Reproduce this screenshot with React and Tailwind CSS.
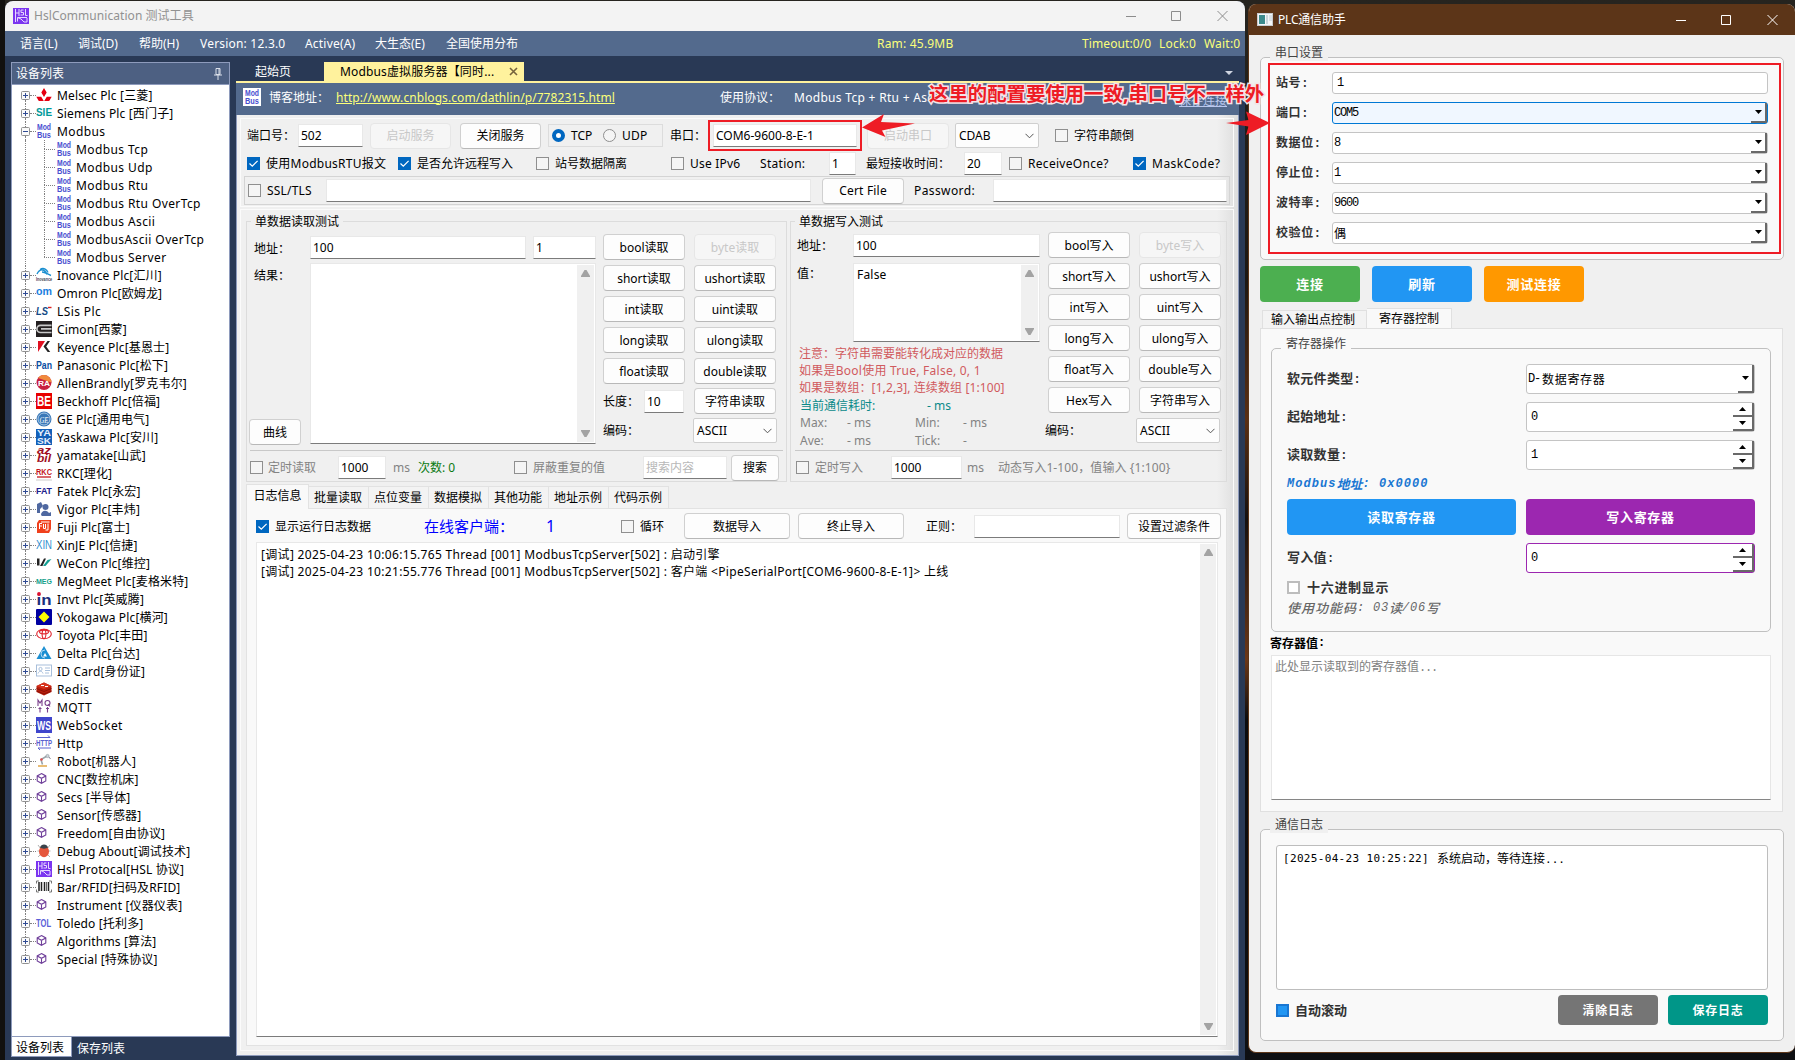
import React from "react";
import clsx from "clsx";

const UI = "font-['Noto_Sans','Noto_Sans_CJK_SC',sans-serif]";
const MONO = "font-['Liberation_Mono','Noto_Sans_CJK_SC',monospace]";

/* ---------- shared controls of the left window ---------- */

function Text({ className, children }) {
  return <div className={clsx("shrink-0 whitespace-nowrap", className)}>{children}</div>;
}

function Check({ on, className }) {
  return (
    <div
      className={clsx(
        "flex h-[13px] w-[13px] shrink-0 items-center justify-center",
        on ? "bg-[#0067c0]" : "border border-[#8f8f8f] bg-[#f5f5f5]",
        className
      )}
    >
      {on && (
        <svg width="11" height="11" viewBox="0 0 11 11" fill="none" stroke="#fff" strokeWidth="1.2">
          <path d="M1.5 5.5 4.3 8.2 9.6 2.8" />
        </svg>
      )}
    </div>
  );
}

function Btn({ disabled, className, children }) {
  return (
    <div
      className={clsx(
        "flex h-[26px] shrink-0 items-center justify-center whitespace-nowrap rounded-[4px] border",
        disabled
          ? "border-[#e6e6e6] bg-[#f6f6f6] text-[#c8c8c8]"
          : "border-[#d0d0d0] border-b-[#b8b8b8] bg-[#fdfdfd] text-black",
        className
      )}
    >
      {children}
    </div>
  );
}

function Input({ className, children }) {
  return (
    <div
      className={clsx(
        "flex h-[23px] shrink-0 items-center whitespace-nowrap border border-[#e8e8e8] border-b-[#7b7b7b] bg-white pl-[2px] text-black",
        className
      )}
    >
      {children}
    </div>
  );
}

function Select({ className, children }) {
  return (
    <div
      className={clsx(
        "flex h-[25px] shrink-0 items-center justify-between rounded-[2px] border border-[#cfcfcf] bg-[#fdfdfd] pl-[3px] pr-[4px] text-black",
        className
      )}
    >
      {children}
      <svg width="9" height="6" viewBox="0 0 9 6" fill="none" stroke="#555" strokeWidth="1">
        <path d="M0.5 0.8 4.5 4.8 8.5 0.8" />
      </svg>
    </div>
  );
}

function Scroll({ className }) {
  return (
    <div className={clsx("flex shrink-0 flex-col items-center justify-between bg-[#f0f0f0] py-[5px]", className)}>
      <svg width="9" height="7" viewBox="0 0 9 7" fill="#a3a3a3"><path d="M3.5 0h2L9 6v1H0V6z" /></svg>
      <svg width="9" height="7" viewBox="0 0 9 7" fill="#a3a3a3"><path d="M3.5 7h2L9 1V0H0v1z" /></svg>
    </div>
  );
}

/* ---------- tree icons ---------- */

function G({ children }) {
  return <svg className="shrink-0 overflow-visible" width="16" height="16" viewBox="0 0 16 16">{children}</svg>;
}

function Word({ t, c = "#fff", bg, size = 8, y = 11, w = 15, x = 0.5, italic, weight = 700 }) {
  return (
    <G>
      {bg && <rect width="16" height="16" fill={bg} />}
      <text x={x} y={y} fill={c} fontSize={size} fontWeight={weight} fontStyle={italic ? "italic" : "normal"} fontFamily="Liberation Sans" textLength={w} lengthAdjust="spacingAndGlyphs">{t}</text>
    </G>
  );
}

function TwoWords({ a, b, c, bg, italic, size = 8 }) {
  return (
    <G>
      {bg && <rect width="16" height="16" fill={bg} />}
      <g fill={c} fontSize={size} fontWeight="700" fontStyle={italic ? "italic" : "normal"} fontFamily="Liberation Sans">
        <text x="1" y="7" textLength="14" lengthAdjust="spacingAndGlyphs">{a}</text>
        <text x="1" y="14.500" textLength="14" lengthAdjust="spacingAndGlyphs">{b}</text>
      </g>
    </G>
  );
}

const ModIcon = () => <TwoWords a="Mod" b="Bus" c="#4a4fd0" size={8.8} />;

const HslIcon = () => (
  <G>
    <rect width="16" height="16" fill="#7b35f0" />
    <g fill="none" stroke="#e6d8ff" strokeWidth="1">
      <path d="M2.500 1v13M2.500 5h3.500M6 1v7M10.500 2H8v2.500h2.500V7H7.500M12.500 1v6.500h2M4.500 13.500v-4l3.500 1.500 3 3h3v-4M5 9.500h9" />
    </g>
  </G>
);

const Cube = () => (
  <G>
    <g fill="none" stroke="#6f3f9a" strokeWidth="1.100" transform="translate(-0.5 0)">
      <path d="M6 2.600 10.300 4.900v5L6 12.300 1.700 9.900v-5zM6 7.300v5M1.700 4.900 6 7.300l4.300-2.400" />
    </g>
  </G>
);

const ICONS = {
  melsec: <G><g fill="#e60012"><path d="M8 1 10.700 5.500 8 10 5.300 5.500zM5.200 9.700H0.300L2.800 14H7.800zM10.800 9.700h4.900L13.200 14H8.200z" /></g></G>,
  siemens: <Word t="SIE" c="#009999" size={10} w={16} x={0} />,
  modbus: <ModIcon />,
  inovance: <G><g fill="none" stroke="#1b8fd0" strokeWidth="1.400"><path d="M1 7C4 1 9 2 11 7.500M4 2.500C8 0 11 3 12 5.500M6 5c3 0 5 2 9 3.500" /></g><text x="0" y="13.500" fontSize="5" fill="#445" fontWeight="700" fontFamily="Liberation Sans" textLength="16" lengthAdjust="spacingAndGlyphs">Inovance</text></G>,
  omron: <Word t="om" c="#1a80e0" size={11} y={9.500} w={16} x={0} />,
  lsis: <G><text x="0" y="12" fontSize="10" fontStyle="italic" fontWeight="700" fill="#134a86" fontFamily="Liberation Sans" textLength="12" lengthAdjust="spacingAndGlyphs">LS</text><path d="M12 4.500h3.500" stroke="#d22" strokeWidth="1.400" /></G>,
  cimon: <G><rect width="16" height="16" fill="#231f20" /><path d="M15.500 4.300H4.500a3.600 3.600 0 0 0 0 7.200H15.500M5 7.900h10.500" fill="none" stroke="#c8c8c8" strokeWidth="1.700" /></G>,
  keyence: <G><path d="M2 2h7L2 13z" fill="#e01020" /><path d="M7.500 7.500l4-5.500h2.500l-3.800 5.500 4 5.500h-2.500z" fill="#222" /></G>,
  panasonic: <Word t="Pan" c="#0b4ea2" size={11.5} y={12} w={16} x={0} />,
  allen: <G><circle cx="8" cy="7.500" r="7.500" fill="#c8203f" /><path d="M8 0a7.500 7.500 0 0 1 7.500 7.500L2 3A7 7 0 0 1 8 0z" fill="#f08a3c" /><text x="2" y="10.500" fontSize="8" fontWeight="700" fill="#fff" fontFamily="Liberation Sans" textLength="12" lengthAdjust="spacingAndGlyphs">RA</text></G>,
  beckhoff: <Word t="BE" bg="#e80000" size={14} y={13} w={14} x={1} />,
  ge: <G><circle cx="8" cy="8" r="7.500" fill="#3a78b8" /><circle cx="8" cy="8" r="6" fill="none" stroke="#d6e6f5" strokeWidth="0.700" /><text x="3.500" y="11.500" fontSize="9" fontStyle="italic" fill="#fff" fontFamily="Liberation Serif" textLength="9" lengthAdjust="spacingAndGlyphs">GE</text></G>,
  yaskawa: <TwoWords a="YA" b="SK" c="#e8f2ff" bg="#1560b8" size={9} />,
  yamatake: <TwoWords a="az" b="bil" c="#a00d22" italic size={10} />,
  rkc: <G><text x="0" y="10" fontSize="9" fontWeight="700" fill="#c4161c" fontFamily="Liberation Sans" textLength="16" lengthAdjust="spacingAndGlyphs">RKC</text><path d="M1 12h14" stroke="#c4161c" strokeWidth="1.300" /><path d="M0 15h16" stroke="#ccc" /></G>,
  fatek: <Word t="FAT" c="#20208c" size={8.5} w={16} x={0} />,
  vigor: <G><g fill="#4f68a0"><path d="M1 3l4-2 2 4-3 3v4H1V8z" /><circle cx="9.500" cy="6" r="3" /><path d="M5 14c0-4 5-6 8-2l2-1v4H6z" /></g></G>,
  fuji: <G><path d="M3 1h12v9l-2 4H1V4z" fill="#f0401c" /><path d="M3.500 10V4.500H6M3.500 7H6M7.500 5v4.500h2V5M12 4.500V11H9.500M13.500 3H5" fill="none" stroke="#fff" strokeWidth="1" /></G>,
  xinje: <Word t="XIN" c="#2f8fd0" size={12} y={12} w={16} x={0} weight={400} />,
  wecon: <G><path d="M1 3.500h2.500v7H1z" fill="#222" /><path d="M4 11l4-7.500h2L6.500 11z" fill="#222" /><path d="M7 11l4.500-6L15.500 4 9.500 11z" fill="#12a094" /></G>,
  megmeet: <Word t="MEG" c="#13a08a" size={7.5} y={10.5} w={16} x={0} />,
  invt: <G><text x="0.500" y="13.500" fontSize="14" fontWeight="700" fill="#1a2f7c" fontFamily="Liberation Sans" textLength="15" lengthAdjust="spacingAndGlyphs">in</text><circle cx="3" cy="3" r="1.900" fill="#e01030" /></G>,
  yokogawa: <G><rect width="16" height="16" rx="1" fill="#0000a0" /><path d="M8 2.500 13.500 8 8 13.500 2.500 8z" fill="#ffff00" /></G>,
  toyota: <G><g fill="none" stroke="#e0242c" strokeWidth="1.100"><ellipse cx="8" cy="7" rx="7.300" ry="4.800" /><ellipse cx="8" cy="5" rx="4.500" ry="1.900" /><ellipse cx="8" cy="7" rx="1.900" ry="4.600" /></g></G>,
  delta: <G><path d="M8 1 15.500 14H0.500z" fill="#1b8fd2" /><path d="M9 5a4 4 0 0 0 0 8" fill="none" stroke="#bfe0f5" strokeWidth="0.900" /><path d="M9 8 7 11.500h4z" fill="#fff" /></G>,
  idcard: <G><g fill="none" stroke="#9fb9d8" strokeWidth="0.900"><rect x="0.500" y="2" width="15" height="11" /><circle cx="4.500" cy="6" r="1.600" /><path d="M2 10.500c1-3 4-3 5 0M9 5h5M9 7.500h5M9 10h4" /></g></G>,
  redis: <G><path d="M0.500 5 8 1.500 15.500 5v6L8 14.500 0.500 11z" fill="#b81c0c" /><path d="M0.500 5 8 8 15.500 5 8 1.500z" fill="#d83520" /><path d="M0.500 7.500 8 10.500l7.500-3M0.500 10 8 13l7.500-3" fill="none" stroke="#7e0f06" strokeWidth="0.800" /><path d="M5 4.500h3M9 5.500h3" stroke="#fff" strokeWidth="1" /></G>,
  mqtt: <G><g fill="none" stroke="#7a3f8c" strokeWidth="1.100"><path d="M2 7V1l2 3 2-3v6M4 8v5.500M2.500 9.500h3M11.500 8v5.500M10 9.500h3" /><circle cx="11.500" cy="4" r="2.500" /><path d="M12 5l2 2.500" /></g></G>,
  ws: <Word t="WS" bg="#3f45cc" size={13} y={12.8} w={14} x={1} />,
  http: <G><text x="0" y="11" fontSize="9" fontWeight="700" fill="#5a62d0" fontFamily="Liberation Sans" textLength="16" lengthAdjust="spacingAndGlyphs">HTTP</text><path d="M1 2.500h13l-2-2M15 13H2l2 2" fill="none" stroke="#5a62d0" strokeWidth="1" /></G>,
  robot: <G><path d="M6.500 11.500 5 6.500 11 3" fill="none" stroke="#9aa4aa" strokeWidth="1.600" /><circle cx="5.500" cy="6.500" r="1.300" fill="#e05050" /><circle cx="11.500" cy="3" r="1.600" fill="#cfd6da" stroke="#8a949a" strokeWidth="0.600" /><path d="M13 4l1.500 2" stroke="#889" /><path d="M2 12h9v2H2z" fill="#e8bc74" /></G>,
  cube: <Cube />,
  bug: <G><path d="M2 2l3 4M14 2l-3 4M1.500 8h3M14.500 8h-3M2 14l3-3M14 14l-3-3" stroke="#a8a8a8" strokeWidth="0.900" /><ellipse cx="8" cy="8.500" rx="5" ry="5.800" fill="#e5573c" /><path d="M4 4.500C5 0.500 11 0.500 12 4.500 10 6 6 6 4 4.500z" fill="#39424a" /></G>,
  hsl: <HslIcon />,
  bar: <G><path d="M3 2H0.500v2.500M13 2h2.500v2.500M3 13H0.500v-2.500M13 13h2.500v-2.500" fill="none" stroke="#666" strokeWidth="0.900" /><path d="M3 3v9M5.500 3v9M8.500 3v9M12.500 3v9" stroke="#222" strokeWidth="1.500" /><path d="M10.500 3v9" stroke="#222" strokeWidth="0.700" /></G>,
  tol: <Word t="TOL" c="#5a5fd8" size={11} y={11.5} w={15} x={0} />,
};

const TREE = [
  ["melsec", "Melsec Plc [三菱]"],
  ["siemens", "Siemens Plc [西门子]"],
  ["modbus", "Modbus", ["Modbus Tcp", "Modbus Udp", "Modbus Rtu", "Modbus Rtu OverTcp", "Modbus Ascii", "ModbusAscii OverTcp", "Modbus Server"]],
  ["inovance", "Inovance Plc[汇川]"],
  ["omron", "Omron Plc[欧姆龙]"],
  ["lsis", "LSis Plc"],
  ["cimon", "Cimon[西蒙]"],
  ["keyence", "Keyence Plc[基恩士]"],
  ["panasonic", "Panasonic Plc[松下]"],
  ["allen", "AllenBrandly[罗克韦尔]"],
  ["beckhoff", "Beckhoff Plc[倍福]"],
  ["ge", "GE Plc[通用电气]"],
  ["yaskawa", "Yaskawa Plc[安川]"],
  ["yamatake", "yamatake[山武]"],
  ["rkc", "RKC[理化]"],
  ["fatek", "Fatek Plc[永宏]"],
  ["vigor", "Vigor Plc[丰炜]"],
  ["fuji", "Fuji Plc[富士]"],
  ["xinje", "XinJE Plc[信捷]"],
  ["wecon", "WeCon Plc[维控]"],
  ["megmeet", "MegMeet Plc[麦格米特]"],
  ["invt", "Invt Plc[英威腾]"],
  ["yokogawa", "Yokogawa Plc[横河]"],
  ["toyota", "Toyota Plc[丰田]"],
  ["delta", "Delta Plc[台达]"],
  ["idcard", "ID Card[身份证]"],
  ["redis", "Redis"],
  ["mqtt", "MQTT"],
  ["ws", "WebSocket"],
  ["http", "Http"],
  ["robot", "Robot[机器人]"],
  ["cube", "CNC[数控机床]"],
  ["cube", "Secs [半导体]"],
  ["cube", "Sensor[传感器]"],
  ["cube", "Freedom[自由协议]"],
  ["bug", "Debug About[调试技术]"],
  ["hsl", "Hsl Protocal[HSL 协议]"],
  ["bar", "Bar/RFID[扫码及RFID]"],
  ["cube", "Instrument [仪器仪表]"],
  ["tol", "Toledo [托利多]"],
  ["cube", "Algorithms [算法]"],
  ["cube", "Special [特殊协议]"],
];

function Expander({ open }) {
  return (
    <svg className="shrink-0" width="9" height="9" viewBox="0 0 9 9">
      <rect x="0.500" y="0.500" width="8" height="8" rx="1" fill="#fafafa" stroke="#919191" />
      <path d={open ? "M2 4.500h5" : "M2 4.500h5M4.500 2v5"} stroke="#2f4a93" strokeWidth="1" />
    </svg>
  );
}

function TreeNode({ icon, label, kids, first, last }) {
  return (
    <div>
      <div className="flex h-[18px] items-center">
        <div className="flex w-[9px] shrink-0 flex-col items-center self-stretch">
          <div className={clsx("w-0 flex-1 border-l border-dotted", first ? "border-transparent" : "border-[#808080]")} />
          <Expander open={!!kids} />
          <div className={clsx("w-0 flex-1 border-l border-dotted", last ? "border-transparent" : "border-[#808080]")} />
        </div>
        <div className="w-[6px] border-t border-dotted border-[#808080]" />
        {ICONS[icon]}
        <div className={clsx("ml-[5px] whitespace-nowrap", /^[\x20-\x7e]+$/.test(label) ? "tracking-[0.400px]" : "tracking-[0.150px]")}>{label}</div>
      </div>
      {kids && (
        <div className="ml-[4px] border-l border-dotted border-[#808080]">
          {kids.map((k, i) => (
            <div key={k} className="ml-[18px] flex h-[18px] items-center">
              <div className="flex w-0 flex-col self-stretch">
                <div className="flex-1 border-l border-dotted border-[#808080]" />
                <div className={clsx("flex-1 border-l border-dotted", i === kids.length - 1 ? "border-transparent" : "border-[#808080]")} />
              </div>
              <div className="mr-px w-[11px] border-t border-dotted border-[#808080]" />
              <ModIcon />
              <div className="ml-[4px] whitespace-nowrap tracking-[0.400px]">{k}</div>
            </div>
          ))}
        </div>
      )}
    </div>
  );
}

function Sidebar() {
  return (
    <div className="ml-[6px] mt-[6px] flex w-[219px] shrink-0 flex-col">
      <div className="flex h-[23px] shrink-0 items-center justify-between border border-[#8e9bbc] bg-[#4d6082] pl-[4px] pr-[7px] text-white">
        <span>设备列表</span>
        <svg width="8" height="12" viewBox="0 0 8 12" fill="none" stroke="#dbe0ea"><path d="M2 0.500h4v6H2zM5 0v7M0 7h8M4 7v5" /></svg>
      </div>
      <div className="flex h-[952px] shrink-0 flex-col border border-t-0 border-[#8e9bbc] bg-white pl-[9px] pt-[1px] text-black">
        {TREE.map(([icon, label, kids], i) => (
          <TreeNode key={label} icon={icon} label={label} kids={kids} first={i === 0} last={i === TREE.length - 1} />
        ))}
      </div>
      <div className="flex h-[20px] text-white">
        <div className="flex w-[61px] items-center border border-t-0 border-[#8e9bbc] bg-white pl-[4px] pt-[2px] text-black">设备列表</div>
        <div className="ml-[5px] flex items-center pt-[2px]">保存列表</div>
      </div>
    </div>
  );
}

/* ---------- left window, server page ---------- */

function ConfigPanel() {
  return (
    <div className="ml-[3px] mt-[3px] h-[89px] w-[994px] shrink-0 border border-[#fbfbfb]">
      <div className="mt-[1px] flex h-[31px] items-center pl-[6px]">
        <Text className="w-[51px]">端口号：</Text>
        <Input className="w-[65px]">502</Input>
        <Btn disabled className="ml-[7px] w-[81px]">启动服务</Btn>
        <Btn className="ml-[9px] w-[81px]">关闭服务</Btn>
        <div className="ml-[7px] flex h-[23px] w-[115px] shrink-0 items-center border border-[#dcdcdc] pl-[3px]">
          <div className="h-[13px] w-[13px] rounded-full border-[4px] border-[#0067c0] bg-white" />
          <Text className="ml-[6px] w-[32px]">TCP</Text>
          <div className="h-[13px] w-[13px] rounded-full border border-[#8f8f8f] bg-[#f5f5f5]" />
          <Text className="ml-[6px] tracking-[0.200px]">UDP</Text>
        </div>
        <Text className="ml-[7px] w-[38px]">串口：</Text>
        <div className="flex h-[31px] w-[154px] shrink-0 items-center border-2 border-[#ee1c25] pl-[3px]">
          <Input className="w-[144px]">COM6-9600-8-E-1</Input>
        </div>
        <Btn disabled className="ml-[5px] w-[82px]">启动串口</Btn>
        <Select className="ml-[6px] w-[84px]">CDAB</Select>
        <Check className="ml-[16px]" />
        <Text className="ml-[6px]">字符串颠倒</Text>
      </div>
      <div className="flex h-[24px] items-center pl-[6px]">
        <Check on />
        <Text className="ml-[6px] w-[132px] tracking-[0.250px]">使用ModbusRTU报文</Text>
        <Check on />
        <Text className="ml-[6px] w-[119px]">是否允许远程写入</Text>
        <Check />
        <Text className="ml-[6px] w-[116px]">站号数据隔离</Text>
        <Check />
        <Text className="ml-[6px] w-[70px] tracking-[0.200px]">Use IPv6</Text>
        <Text className="w-[69px] tracking-[0.300px]">Station:</Text>
        <Input className="w-[27px]">1</Input>
        <Text className="ml-[10px] w-[98px]">最短接收时间：</Text>
        <Input className="w-[38px]">20</Input>
        <Check className="ml-[7px]" />
        <Text className="ml-[6px] w-[105px] tracking-[0.300px]">ReceiveOnce?</Text>
        <Check on />
        <Text className="ml-[6px] tracking-[0.500px]">MaskCode?</Text>
      </div>
      <div className="ml-[3px] mt-px flex h-[29px] w-[986px] items-center border border-[#d4d4d4] pl-[3px]">
        <Check />
        <Text className="ml-[6px] w-[59px] tracking-[0.200px]">SSL/TLS</Text>
        <Input className="w-[485px]" />
        <Btn className="ml-[11px] w-[82px] tracking-[0.200px]">Cert File</Btn>
        <Text className="ml-[10px] w-[79px] tracking-[0.400px]">Password:</Text>
        <Input className="w-[234px]" />
      </div>
    </div>
  );
}

function Fieldset({ title, className, children }) {
  return (
    <div className={clsx("h-[261px] shrink-0 border border-[#dcdcdc]", className)}>
      <div className="-mt-[10px] ml-[4px] flex h-[20px] w-fit items-center bg-[#f0f0f0] px-[4px] pb-px">{title}</div>
      {children}
    </div>
  );
}

function ReadBox() {
  return (
    <Fieldset title="单数据读取测试" className="w-[541px]">
      <div className="flex h-[216px] pl-[2px] pt-[2px]">
        <div className="flex w-[61px] shrink-0 flex-col">
          <Text className="ml-[5px] mt-[6px]">地址：</Text>
          <Text className="ml-[5px] mt-[10px]">结果：</Text>
          <Btn className="mt-[135px] w-[52px]">曲线</Btn>
        </div>
        <div className="mt-[2px] w-[286px] shrink-0">
          <div className="flex justify-between">
            <Input className="w-[216px]">100</Input>
            <Input className="w-[63px]">1</Input>
          </div>
          <div className="mt-[4px] flex h-[181px] justify-end border border-[#e8e8e8] border-b-[#7b7b7b] bg-white p-px">
            <Scroll className="w-[17px]" />
          </div>
        </div>
        <div className="ml-[7px] grid h-fit grid-cols-[82px_82px] gap-x-[9px] gap-y-[5px]">
          <Btn>bool读取</Btn><Btn disabled>byte读取</Btn>
          <Btn>short读取</Btn><Btn>ushort读取</Btn>
          <Btn>int读取</Btn><Btn>uint读取</Btn>
          <Btn>long读取</Btn><Btn>ulong读取</Btn>
          <Btn>float读取</Btn><Btn>double读取</Btn>
          <div className="-mt-px flex items-center"><Text className="w-[41px]">长度：</Text><Input className="w-[40px]">10</Input></div>
          <Btn className="-mt-px">字符串读取</Btn>
          <Text className="mt-[3px]">编码：</Text>
          <Select className="-ml-px -mt-px w-[84px]">ASCII</Select>
        </div>
      </div>
      <div className="mx-[3px] mt-[2px] border-b border-[#c8c8c8]" />
      <div className="mt-[5px] flex h-[23px] items-center pl-[3px] text-[#838383]">
        <Check />
        <Text className="ml-[5px] w-[70px]">定时读取</Text>
        <Input className="w-[48px]">1000</Input>
        <Text className="ml-[7px] w-[25px]">ms</Text>
        <Text className="w-[96px] text-[#0a7a12]">次数: 0</Text>
        <Check />
        <Text className="ml-[6px] w-[110px]">屏蔽重复的值</Text>
        <Input className="w-[84px]"><span className="text-[#b8b8b8]">搜索内容</span></Input>
        <Btn className="ml-[4px] h-[24px] w-[48px]">搜索</Btn>
      </div>
    </Fieldset>
  );
}

function WriteBox() {
  return (
    <Fieldset title="单数据写入测试" className="ml-[3px] w-[437px]">
      <div className="flex h-[216px] pl-[6px]">
        <div className="w-[243px] shrink-0">
          <div className="mt-[2px] flex items-center">
            <Text className="w-[56px]">地址：</Text>
            <Input className="w-[187px]">100</Input>
          </div>
          <div className="mt-[6px] flex">
            <Text className="mt-[2px] w-[56px]">值：</Text>
            <div className="flex h-[79px] w-[187px] justify-between border border-[#e8e8e8] border-b-[#7b7b7b] bg-white p-px">
              <span className="ml-[2px] mt-px tracking-[0.200px]">False</span>
              <Scroll className="w-[17px]" />
            </div>
          </div>
          <div className="ml-[2px] mt-[3px] whitespace-nowrap leading-[17px] text-[#d05a5e]">
            <div>注意：字符串需要能转化成对应的数据</div>
            <div className="tracking-[0.250px]">如果是Bool使用 True, False, 0, 1</div>
            <div className="tracking-[0.100px]">如果是数组：[1,2,3], 连续数组 [1:100]</div>
          </div>
          <div className="ml-[3px] flex h-[18px] items-center text-[#0a8a8a]">
            <Text className="w-[127px]">当前通信耗时:</Text>- ms
          </div>
          <div className="ml-[3px] grid h-[35px] grid-cols-[47px_68px_48px_40px] items-center text-[#838383]">
            <span>Max:</span><span>- ms</span><span>Min:</span><span>- ms</span>
            <span>Ave:</span><span>- ms</span><span>Tick:</span><span>-</span>
          </div>
        </div>
        <div className="ml-[8px] grid h-fit grid-cols-[82px_82px] gap-x-[9px] gap-y-[5px]">
          <Btn>bool写入</Btn><Btn disabled>byte写入</Btn>
          <Btn>short写入</Btn><Btn>ushort写入</Btn>
          <Btn>int写入</Btn><Btn>uint写入</Btn>
          <Btn>long写入</Btn><Btn>ulong写入</Btn>
          <Btn>float写入</Btn><Btn>double写入</Btn>
          <Btn>Hex写入</Btn><Btn>字符串写入</Btn>
          <Text className="-ml-[3px] mt-[4px]">编码：</Text>
          <Select className="-ml-[3px] w-[84px]">ASCII</Select>
        </div>
      </div>
      <div className="mx-[4px] mt-[2px] border-b border-[#c8c8c8]" />
      <div className="mt-[5px] flex h-[23px] items-center pl-[5px] text-[#838383]">
        <Check />
        <Text className="ml-[6px] w-[76px]">定时写入</Text>
        <Input className="w-[71px]">1000</Input>
        <Text className="ml-[5px] w-[31px]">ms</Text>
        <Text className="tracking-[0.100px]">动态写入1-100，值输入 &#123;1:100&#125;</Text>
      </div>
    </Fieldset>
  );
}

function LogPane() {
  return (
    <div className="ml-[9px] mt-[2px]">
      <div className="flex items-end">
        <div className="-mb-px flex h-[25px] w-[63px] items-center justify-center border border-b-0 border-[#e2e2e2] bg-[#f9f9f9] pb-[3px]">日志信息</div>
        {["批量读取", "点位变量", "数据模拟", "其他功能", "地址示例", "代码示例"].map((t) => (
          <div key={t} className="flex h-[22px] w-[60px] items-center border border-b-0 border-l-0 border-[#e2e2e2] bg-[#f3f3f3] pl-[5px]">{t}</div>
        ))}
      </div>
      <div className="h-[538px] w-[981px] border border-[#e2e2e2] bg-[#f9f9f9]">
        <div className="mt-[4px] flex h-[26px] items-center pl-[9px]">
          <Check on />
          <Text className="ml-[6px] w-[149px]">显示运行日志数据</Text>
          <Text className="w-[122px] text-[15px] text-[#0000ff]">在线客户端：</Text>
          <Text className="w-[75px] text-[16px] text-[#0000ff]">1</Text>
          <Check />
          <Text className="ml-[6px] w-[44px]">循环</Text>
          <Btn className="w-[106px]">数据导入</Btn>
          <Btn className="ml-[8px] w-[106px]">终止导入</Btn>
          <Text className="ml-[22px] w-[48px]">正则：</Text>
          <Input className="w-[146px]" />
          <Btn className="ml-[7px] w-[94px]">设置过滤条件</Btn>
        </div>
        <div className="ml-[9px] mt-[3px] flex h-[495px] w-[962px] justify-between border border-[#e8e8e8] border-b-[#7b7b7b] bg-white p-px">
          <div className="pl-[3px] pt-[2px] leading-[17px] tracking-[0.320px]">
            <div>[调试] 2025-04-23 10:06:15.765 Thread [001] ModbusTcpServer[502] : 启动引擎</div>
            <div>[调试] 2025-04-23 10:21:55.776 Thread [001] ModbusTcpServer[502] : 客户端 &lt;PipeSerialPort[COM6-9600-8-E-1]&gt; 上线</div>
          </div>
          <Scroll className="w-[16px]" />
        </div>
      </div>
    </div>
  );
}

function ServerPage() {
  return (
    <div className="ml-[6px] flex w-[1003px] shrink-0 flex-col">
      <div className="flex h-[27px] shrink-0 items-end border-b-2 border-[#fff29d]">
        <div className="flex h-[19px] w-[88px] items-center pl-[19px] text-white">起始页</div>
        <div className="flex h-[19px] w-[200px] items-center justify-between bg-[#fff29d] pl-[16px] pr-[6px] text-black">
          <span className="whitespace-nowrap tracking-[0.150px]">Modbus虚拟服务器【同时...</span>
          <svg width="9" height="9" viewBox="0 0 9 9" stroke="#75633d" strokeWidth="1.600"><path d="M1 1l7 7M8 1 1 8" /></svg>
        </div>
        <svg className="mb-[6px] ml-auto mr-[6px]" width="8" height="4" viewBox="0 0 8 4" fill="#ced4e0"><path d="M0 0h8L4 4z" /></svg>
      </div>
      <div className="flex h-[32px] shrink-0 items-center bg-[#536a8d] pb-[4px] pl-[7px] text-white">
        <div className="flex h-[18px] w-[18px] shrink-0 items-center justify-center bg-white"><ModIcon /></div>
        <Text className="ml-[8px] w-[67px]">博客地址：</Text>
        <Text className="w-[384px] tracking-[0.070px] text-[#fbff7a] underline">http://www.cnblogs.com/dathlin/p/7782315.html</Text>
        <Text className="w-[74px]">使用协议：</Text>
        <Text className="tracking-[0.300px]">Modbus Tcp + Rtu + Ascii</Text>
        <Text className="ml-auto mr-[12px] mt-[6px] text-[#b9c8ee] underline">保存连接</Text>
      </div>
      <div className="flex h-[941px] flex-col border-x border-b border-[#8e9bbc] bg-[linear-gradient(90deg,#f0f0f0_0,#f0f0f0_980px,#dcdcdc_1002px)]">
        <ConfigPanel />
        <div className="ml-[3px] mt-[2px] h-[842px] w-[994px] border border-[#fbfbfb]">
          <div className="ml-[5px] mt-[11px] flex"><ReadBox /><WriteBox /></div>
          <div className="-ml-[4px]"><LogPane /></div>
        </div>
      </div>
    </div>
  );
}

function HslWindow() {
  return (
    <div className="mt-px flex h-[1059px] w-[1240px] shrink-0 flex-col overflow-hidden rounded-t-[8px] bg-[#293955]">
      <div className="flex h-[30px] shrink-0 items-center bg-[#f3f3f3] pl-[8px] text-[#919191]">
        <HslIcon />
        <span className="ml-[5px] pb-px tracking-[0.050px]">HslCommunication 测试工具</span>
        <svg className="mb-px ml-auto mr-[16px]" width="104" height="12" viewBox="0 0 104 12" fill="none" stroke="#8c8c8c">
          <path d="M1 6.500h10M46.500 1.500h9v9h-9zM92.500 1l10 10M102.500 1l-10 10" />
        </svg>
      </div>
      <div className="flex h-[25px] shrink-0 items-center bg-[#536a8d] pl-[15px] text-white">
        <Text className="w-[58px]">语言(L)</Text>
        <Text className="w-[61px]">调试(D)</Text>
        <Text className="w-[61px]">帮助(H)</Text>
        <Text className="w-[105px] tracking-[0.200px]">Version: 12.3.0</Text>
        <Text className="w-[70px] tracking-[0.200px]">Active(A)</Text>
        <Text className="w-[71px]">大生态(E)</Text>
        <Text className="w-[431px]">全国使用分布</Text>
        <Text className="w-[205px] tracking-[0.200px] text-[#fbff7a]">Ram: 45.9MB</Text>
        <Text className="w-[77px] tracking-[0.100px] text-[#fbff7a]">Timeout:0/0</Text>
        <Text className="w-[45px] tracking-[0.200px] text-[#fbff7a]">Lock:0</Text>
        <Text className="tracking-[0.200px] text-[#fbff7a]">Wait:0</Text>
      </div>
      <div className="flex">
        <Sidebar />
        <ServerPage />
      </div>
    </div>
  );
}

/* ---------- right window ---------- */

function Half({ size = "text-[12px] tracking-[-1.200px]", children }) {
  return <span className={clsx(MONO, size)}>{children}</span>;
}

function QtArrow({ up }) {
  return <svg width="7" height="4" viewBox="0 0 7 4"><path d={up ? "M0 4h7L3.500 0z" : "M0 0h7L3.500 4z"} /></svg>;
}

function QtField({ kind, focus, purple, className, children }) {
  return (
    <div
      className={clsx(
        "flex shrink-0 items-stretch justify-between rounded-[3px] border text-black",
        focus ? "border-[#0078d4] bg-[#f0f7ff]" : purple ? "border-[#9c27b0] bg-white" : "border-[#c4c4c4] bg-white",
        className
      )}
    >
      <div className={clsx("flex items-center", kind === "combo" ? "pl-[1px]" : "pl-[4px]")}>{children}</div>
      {kind === "combo" && (
        <div className="flex w-[16px] items-center justify-center border-b-2 border-r-2 border-[#696969]"><QtArrow /></div>
      )}
      {kind === "spin" && (
        <div className="flex w-[21px] flex-col">
          <div className="flex flex-1 items-center justify-center border-b-2 border-r-2 border-[#696969]"><QtArrow up /></div>
          <div className="flex flex-1 items-center justify-center border-b-2 border-r-2 border-[#696969]"><QtArrow /></div>
        </div>
      )}
    </div>
  );
}

function QtGroup({ title, bg, className, children }) {
  return (
    <div className={clsx("shrink-0 rounded-[5px] border border-[#c0c0c0] bg-[#f9f9f9]", className)}>
      <div className={clsx("-mt-[13px] ml-[9px] flex h-[16px] w-fit items-center px-[5px] pb-px text-[#444]", bg)}>{title}</div>
      {children}
    </div>
  );
}

function QtButton({ small, className, children }) {
  return (
    <div
      className={clsx(
        "flex shrink-0 items-center justify-center rounded-[4px] font-bold text-white",
        small ? "text-[12px]" : "text-[13px]",
        "tracking-[0.700px]",
        className
      )}
    >
      {children}
    </div>
  );
}

const PORT_ROWS = [
  ["站号", "1", "plain"],
  ["端口", "COM5", "combo"],
  ["数据位", "8", "combo"],
  ["停止位", "1", "combo"],
  ["波特率", "9600", "combo"],
  ["校验位", "偶", "combo"],
];

function PortGroup() {
  return (
    <QtGroup title="串口设置" bg="bg-[#f0f0f0]" className="ml-[11px] mt-[22px] h-[203px] w-[524px]">
      <div className="ml-[7px] mt-[2px] flex h-[191px] w-[513px] flex-col gap-[8px] border-2 border-[#ee1c25] pl-[6px] pt-[7px]">
        {PORT_ROWS.map(([l, v, kind]) => (
          <div key={l} className="flex h-[22px] items-center">
            <Text className="w-[56px] font-bold tracking-[0.600px] text-[#333]">{l}<Half>:</Half></Text>
            <QtField kind={kind} focus={v === "COM5"} className="h-[22px] w-[436px]">
              {v === "偶" ? v : <Half>{v}</Half>}
            </QtField>
          </div>
        ))}
      </div>
    </QtGroup>
  );
}

function RegisterRow({ label, className, children }) {
  return (
    <div className={clsx("flex h-[30px] items-center", className)}>
      <Text className="w-[239px] pt-px text-[13px] font-bold tracking-[0.300px] text-[#333]">{label}<Half>:</Half></Text>
      {children}
    </div>
  );
}

const WIDE = "text-[12px] tracking-[1.050px]";
const MID = "text-[12px] tracking-[0.800px]";

function RegisterPane() {
  return (
    <>
      <div className="ml-[13px] mt-[6px] flex items-end">
        <div className="flex h-[18px] w-[105px] items-center whitespace-nowrap border border-b-0 border-[#e0e0e0] bg-[#f3f3f3] pl-[8px]">输入输出点控制</div>
        <div className="-mb-px flex h-[21px] w-[85px] items-center justify-center border border-b-0 border-l-0 border-[#e0e0e0] bg-[#f9f9f9] pb-px">寄存器控制</div>
      </div>
      <div className="ml-[11px] h-[484px] w-[523px] shrink-0 border border-[#e0e0e0] bg-[#f9f9f9]">
        <QtGroup title="寄存器操作" bg="bg-[#f9f9f9]" className="ml-[10px] mt-[19px] h-[284px] w-[500px]">
          <div className="pl-[15px] pt-[12px]">
            <RegisterRow label="软元件类型">
              <QtField kind="combo" className="h-[30px] w-[229px]"><Half>D-</Half><span className="ml-[2px] tracking-[0.700px]">数据寄存器</span></QtField>
            </RegisterRow>
            <RegisterRow label="起始地址" className="mt-[8px]">
              <QtField kind="spin" className="h-[30px] w-[229px]"><Half>0</Half></QtField>
            </RegisterRow>
            <RegisterRow label="读取数量" className="mt-[8px]">
              <QtField kind="spin" className="h-[30px] w-[229px]"><Half>1</Half></QtField>
            </RegisterRow>
            <div className="mt-[5px] flex h-[18px] items-center whitespace-pre font-bold italic text-[#1976d2]">
              <Half size={WIDE}>Modbus</Half><span className="text-[13px]">地址</span><Half size={WIDE}>: 0x0000</Half>
            </div>
            <div className="mt-[6px] flex gap-[10px]">
              <QtButton className="h-[36px] w-[229px] bg-[#2196f3]">读取寄存器</QtButton>
              <QtButton className="h-[36px] w-[229px] bg-[#9c27b0]">写入寄存器</QtButton>
            </div>
            <RegisterRow label="写入值" className="mt-[8px]">
              <QtField kind="spin" purple className="h-[30px] w-[229px]"><Half>0</Half></QtField>
            </RegisterRow>
            <div className="mt-[5px] flex h-[19px] items-center">
              <div className="h-[13px] w-[13px] border-2 border-[#bdbdbd] bg-white" />
              <Text className="ml-[7px] text-[13px] font-bold tracking-[0.700px] text-[#333]">十六进制显示</Text>
            </div>
            <div className="mt-[2px] flex h-[18px] items-center whitespace-pre font-medium italic text-[#666]">
              <span className="text-[13px] tracking-[1px]">使用功能码</span><Half size={MID}>: 03</Half><span className="text-[13px]">读</span><Half size={MID}>/06</Half><span className="text-[13px]">写</span>
            </div>
          </div>
        </QtGroup>
        <div className="ml-[9px] mt-px flex h-[20px] items-center font-bold">寄存器值<Half>:</Half></div>
        <div className="ml-[10px] mt-[2px] h-[145px] w-[500px] border border-[#e6e6e6] border-b-[#868686] bg-white pl-[3px] pt-[2px] text-[#7f7f7f]">
          此处显示读取到的寄存器值<Half>...</Half>
        </div>
      </div>
    </>
  );
}

function LogGroup() {
  return (
    <QtGroup title="通信日志" bg="bg-[#f0f0f0]" className="ml-[11px] mt-[17px] h-[212px] w-[524px]">
      <div className="ml-[15px] mt-[12px] flex h-[145px] w-[492px] rounded-[3px] border border-[#bdbdbd] bg-white pl-[6px] pt-[4px]">
        <Text className="h-[18px] font-['DejaVu_Sans_Mono','Noto_Sans_CJK_SC',monospace] text-[11px] leading-[18px] tracking-[0.330px]">[2025-04-23 10:25:22]</Text>
        <Text className="ml-[8px] h-[18px] leading-[18px]">系统启动，等待连接<span className="font-['DejaVu_Sans_Mono',monospace] text-[11px]">...</span></Text>
      </div>
      <div className="ml-[15px] mt-[5px] flex w-[492px] items-center">
        <div className="h-[13px] w-[13px] border-2 border-[#1976d2] bg-[#2196f3]" />
        <span className="ml-[6px] text-[13px] font-bold text-[#333]">自动滚动</span>
        <QtButton small className="ml-auto h-[30px] w-[100px] bg-[#757575]">清除日志</QtButton>
        <QtButton small className="ml-[10px] h-[30px] w-[100px] bg-[#009688]">保存日志</QtButton>
      </div>
    </QtGroup>
  );
}

function PlcWindow() {
  return (
    <div className="ml-[3px] mt-[4px] flex h-[1049px] w-[547px] shrink-0 flex-col overflow-hidden rounded-[8px] border-b border-l border-[#5c3518] bg-[#f0f0f0]">
      <div className="flex h-[31px] shrink-0 items-center bg-[#5c3518] pl-[8px] text-white">
        <svg width="16" height="13" viewBox="0 0 16 13">
          <rect x="0.500" y="0.500" width="15" height="12" fill="#f4f6f8" stroke="#c8ccd0" />
          <rect x="2" y="2" width="6" height="9" fill="#3c8a8c" /><rect x="9" y="2" width="2" height="9" fill="#c9d6dc" /><rect x="12" y="2" width="3" height="6" fill="#d9e2e8" />
        </svg>
        <span className="ml-[5px] tracking-[-0.200px]">PLC通信助手</span>
        <svg className="ml-auto mr-[16px]" width="104" height="12" viewBox="0 0 104 12" fill="none" stroke="#fff">
          <path d="M1 6.500h10M46.500 1.500h9v9h-9zM92.500 1l10 10M102.500 1l-10 10" />
        </svg>
      </div>
      <PortGroup />
      <div className="ml-[11px] mt-[6px] flex gap-[12px]">
        <QtButton className="h-[36px] w-[100px] bg-[#4caf50]">连接</QtButton>
        <QtButton className="h-[36px] w-[100px] bg-[#2196f3]">刷新</QtButton>
        <QtButton className="h-[36px] w-[100px] bg-[#ff9800]">测试连接</QtButton>
      </div>
      <RegisterPane />
      <LogGroup />
    </div>
  );
}

/* ---------- red notes drawn over both windows ---------- */

function Notes() {
  return (
    <>
      <div className="absolute left-[929px] top-[80px] whitespace-nowrap text-[19.400px] font-bold leading-[28px] text-[#ee1c25] [-webkit-text-stroke:3px_#f3e4e8] [paint-order:stroke_fill]">
        这里的配置要使用一致,串口号不一样外
      </div>
      <svg className="absolute left-[862px] top-[114px]" width="55" height="25" viewBox="0 0 55 25" fill="#ee1c25">
        <path d="M0 13.500 22 0 19 8 53 9.500 20 16.500 23.500 23z" />
      </svg>
      <svg className="absolute left-[1226px] top-[111px]" width="45" height="25" viewBox="0 0 45 25" fill="#ee1c25">
        <path d="M44 12 20 0.500 22.500 9 0 12 22.500 15.500 20 24z" />
      </svg>
    </>
  );
}

export default function App() {
  return (
    <div className={clsx("relative flex h-[1060px] w-[1795px] overflow-hidden bg-[linear-gradient(180deg,#26241f_0,#1b1714_280px,#5a2f14_420px,#141010_520px,#6b3718_660px,#0a0b0f_720px,#0e0f12_100%)] text-[12px] leading-[17px] text-black", UI)}>
      <div className="w-[5px] shrink-0 bg-[#12110f]" />
      <HslWindow />
      <PlcWindow />
      <Notes />
    </div>
  );
}
